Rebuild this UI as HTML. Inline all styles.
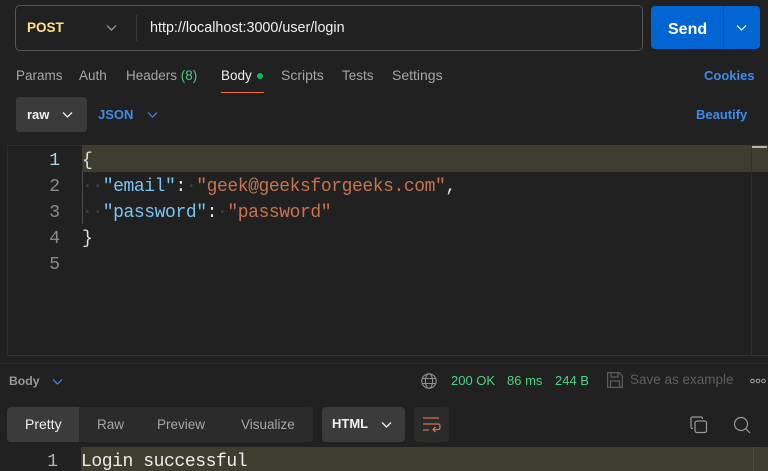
<!DOCTYPE html>
<html><head><meta charset="utf-8"><style>
html,body{margin:0;padding:0;background:#212121;}
#r{position:relative;width:768px;height:471px;overflow:hidden;background:#212121;font-family:"Liberation Sans",sans-serif;font-size:13.5px;color:#a6a6a6;}
.a{position:absolute;white-space:nowrap;}
.b{position:absolute;}
svg{position:absolute;overflow:visible;fill:none;}
.m{font-family:"Liberation Mono",monospace;font-size:18px;line-height:26px;letter-spacing:-0.42px;white-space:pre;position:absolute;}
.n{position:absolute;font-family:"Liberation Mono",monospace;font-size:18px;line-height:26px;width:20px;text-align:right;color:#8c8c8c;left:40px;}
</style></head><body><div id="r">
<div class="b" style="left:15px;top:5px;width:626px;height:44px;border:1px solid #575757;border-radius:5px;"></div>
<div class="a" style="left:27px;top:20px;color:#ffe47e;font-weight:bold;font-size:13.5px;line-height:16px;">POST</div>
<svg style="left:106px;top:24px" width="12" height="8"><path d="M1 1.5L5.5 6L10 1.5" stroke="#a6a6a6" stroke-width="1.2"/></svg>
<div class="b" style="left:136px;top:15px;width:1px;height:26px;background:#3a3a3a;"></div>
<div class="a" style="left:150px;top:20px;color:#f0f0f0;font-size:14.35px;line-height:16px;">http://localhost:3000/user/login</div>
<div class="b" style="left:651px;top:6px;width:109px;height:43px;background:#0265d2;border-radius:4px;"></div>
<div class="b" style="left:723px;top:6px;width:1px;height:43px;background:#0155b3;"></div>
<div class="a" style="left:668px;top:20px;color:#fff;font-weight:bold;font-size:16px;line-height:19px;">Send</div>
<svg style="left:736px;top:24px" width="12" height="8"><path d="M1 1.5L5.5 6L10 1.5" stroke="#fff" stroke-width="1.2"/></svg>

<div class="a" style="left:16px;top:68px;line-height:16px;">Params</div>
<div class="a" style="left:79px;top:68px;line-height:16px;">Auth</div>
<div class="a" style="left:126px;top:68px;line-height:16px;">Headers <span style="color:#4fc97e">(8)</span></div>
<div class="a" style="left:221px;top:68px;line-height:16px;color:#f0f0f0;">Body</div>
<div class="b" style="left:257px;top:73px;width:6px;height:6px;border-radius:50%;background:#0cbb52;"></div>
<div class="b" style="left:221px;top:92px;width:43px;height:1px;background:#f26b3a;"></div>
<div class="a" style="left:281px;top:67px;line-height:16px;font-size:14px;">Scripts</div>
<div class="a" style="left:342px;top:68px;line-height:16px;">Tests</div>
<div class="a" style="left:392px;top:67px;line-height:16px;font-size:14px;">Settings</div>
<div class="a" style="left:704px;top:68px;line-height:16px;color:#3f8bec;font-weight:bold;font-size:13px;">Cookies</div>

<div class="b" style="left:16px;top:97px;width:71px;height:35px;background:#3b3b3b;border-radius:3px;"></div>
<div class="a" style="left:27px;top:107px;line-height:16px;color:#f0f0f0;font-weight:bold;font-size:13px;">raw</div>
<svg style="left:62px;top:111px" width="12" height="8"><path d="M1 1.5L5.5 6L10 1.5" stroke="#f0f0f0" stroke-width="1.3"/></svg>
<div class="a" style="left:98px;top:107px;line-height:16px;color:#3f8bec;font-weight:bold;font-size:13px;">JSON</div>
<svg style="left:147px;top:111px" width="12" height="8"><path d="M1 1.5L5.5 6L10 1.5" stroke="#3f8bec" stroke-width="1.2"/></svg>
<div class="a" style="left:696px;top:107px;line-height:16px;color:#3f8bec;font-weight:bold;font-size:13px;">Beautify</div>

<div class="b" style="left:7px;top:145px;width:761px;height:211px;border-left:1px solid #2e2e2e;border-top:1px solid #2e2e2e;border-bottom:1px solid #333;box-sizing:border-box;"></div>
<div class="b" style="left:82px;top:145px;width:686px;height:27px;background:#3d3d30;"></div>
<div class="b" style="left:751px;top:145px;width:1px;height:211px;background:#303030;"></div>
<div class="b" style="left:752px;top:146px;width:15px;height:2px;background:#b5b5ab;"></div>
<div class="b" style="left:82px;top:172px;width:1px;height:52px;background:#4a4a4a;"></div>
<div class="n" style="top:148px;color:#a9d8e8;">1</div>
<div class="n" style="top:174px;">2</div>
<div class="n" style="top:200px;">3</div>
<div class="n" style="top:226px;">4</div>
<div class="n" style="top:252px;">5</div>
<div class="m" style="left:82px;top:148px;color:#e0e0e0;">{</div>
<div class="m" style="left:82px;top:174px;"><span style="color:#444">··</span><span style="color:#79c4f2">"email"</span><span style="color:#e0e0e0">:</span><span style="color:#444">·</span><span style="color:#c9734f">"geek@geeksforgeeks.com"</span><span style="color:#e0e0e0">,</span></div>
<div class="m" style="left:82px;top:200px;"><span style="color:#444">··</span><span style="color:#79c4f2">"password"</span><span style="color:#e0e0e0">:</span><span style="color:#444">·</span><span style="color:#c9734f">"password"</span></div>
<div class="m" style="left:82px;top:226px;color:#e0e0e0;">}</div>

<div class="b" style="left:0;top:363px;width:768px;height:1px;background:#2e2e2e;"></div>
<div class="a" style="left:9px;top:373px;line-height:16px;font-size:12.2px;font-weight:bold;color:#9a9a9a;">Body</div>
<svg style="left:52px;top:378px" width="12" height="8"><path d="M1 1.5L5.5 6L10 1.5" stroke="#3f8bec" stroke-width="1.2"/></svg>
<svg style="left:421px;top:373px" width="16" height="16" stroke="#8f8f8f" stroke-width="1.1"><circle cx="8" cy="8" r="7.2"/><ellipse cx="8" cy="8" rx="3.6" ry="7.2"/><path d="M1 5.5H15M1 10.5H15"/></svg>
<div class="a" style="left:451px;top:373px;line-height:16px;font-size:13px;color:#4fd286;">200 OK</div>
<div class="a" style="left:507px;top:373px;line-height:16px;font-size:13px;color:#4fd286;">86 ms</div>
<div class="a" style="left:555px;top:373px;line-height:16px;font-size:13px;color:#4fd286;">244 B</div>
<svg style="left:607px;top:372px" width="16" height="16" stroke="#5e5e5e" stroke-width="1.2"><path d="M.6.6H12L15.4 4V15.4H.6Z"/><path d="M4 .6V5H11V.6M3.5 15.4V9H12.5V15.4"/></svg>
<div class="a" style="left:630px;top:372px;line-height:16px;font-size:13.5px;color:#5f5f5f;">Save as example</div>
<svg style="left:750px;top:378px" width="16" height="6" stroke="#a6a6a6" stroke-width="1"><circle cx="2.5" cy="3" r="1.8"/><circle cx="8" cy="3" r="1.8"/><circle cx="13.5" cy="3" r="1.8"/></svg>

<div class="b" style="left:7px;top:407px;width:306px;height:35px;background:#2b2b2b;border-radius:4px;"></div>
<div class="b" style="left:7px;top:407px;width:72px;height:35px;background:#3b3b3b;border-radius:4px 0 0 4px;"></div>
<div class="a" style="left:25px;top:416px;line-height:16px;color:#f0f0f0;font-size:14px;">Pretty</div>
<div class="a" style="left:97px;top:417px;line-height:16px;">Raw</div>
<div class="a" style="left:157px;top:417px;line-height:16px;">Preview</div>
<div class="a" style="left:241px;top:417px;line-height:16px;">Visualize</div>
<div class="b" style="left:322px;top:407px;width:83px;height:35px;background:#3b3b3b;border-radius:4px;"></div>
<div class="a" style="left:332px;top:416px;line-height:16px;font-size:13px;font-weight:bold;color:#f0f0f0;">HTML</div>
<svg style="left:381px;top:421px" width="12" height="8"><path d="M1 1.5L5.5 6L10 1.5" stroke="#f0f0f0" stroke-width="1.3"/></svg>
<div class="b" style="left:414px;top:407px;width:35px;height:35px;background:#2b2b2b;border-radius:4px;"></div>
<svg style="left:423px;top:417px" width="18" height="16" stroke="#d0734e" stroke-width="1.3"><path d="M0 1H16M0 7H15.5C17.5 7 17.5 12.5 15.5 12.5H10M12.5 10L10 12.5L12.5 15M0 13H6"/></svg>
<svg style="left:690px;top:416px" width="18" height="18" stroke="#9a9a9a" stroke-width="1.2"><rect x="5" y="5" width="11.5" height="11.5" rx="2"/><path d="M3 12.5H2.5A1.5 1.5 0 0 1 1 11V2.5A1.5 1.5 0 0 1 2.5 1H11A1.5 1.5 0 0 1 12.5 2.5V3"/></svg>
<svg style="left:733px;top:416px" width="18" height="18" stroke="#9a9a9a" stroke-width="1.2"><circle cx="8" cy="8" r="6.5"/><path d="M12.7 12.7L17 17"/></svg>

<div class="b" style="left:81px;top:447px;width:687px;height:24px;background:#3d3d30;"></div>
<div class="b" style="left:753px;top:447px;width:1px;height:24px;background:#4a4a40;"></div>
<div class="n" style="top:449px;left:38px;color:#b5b5b5;">1</div>
<div class="m" style="left:81px;top:449px;color:#ededed;">Login successful</div>
</div></body></html>
